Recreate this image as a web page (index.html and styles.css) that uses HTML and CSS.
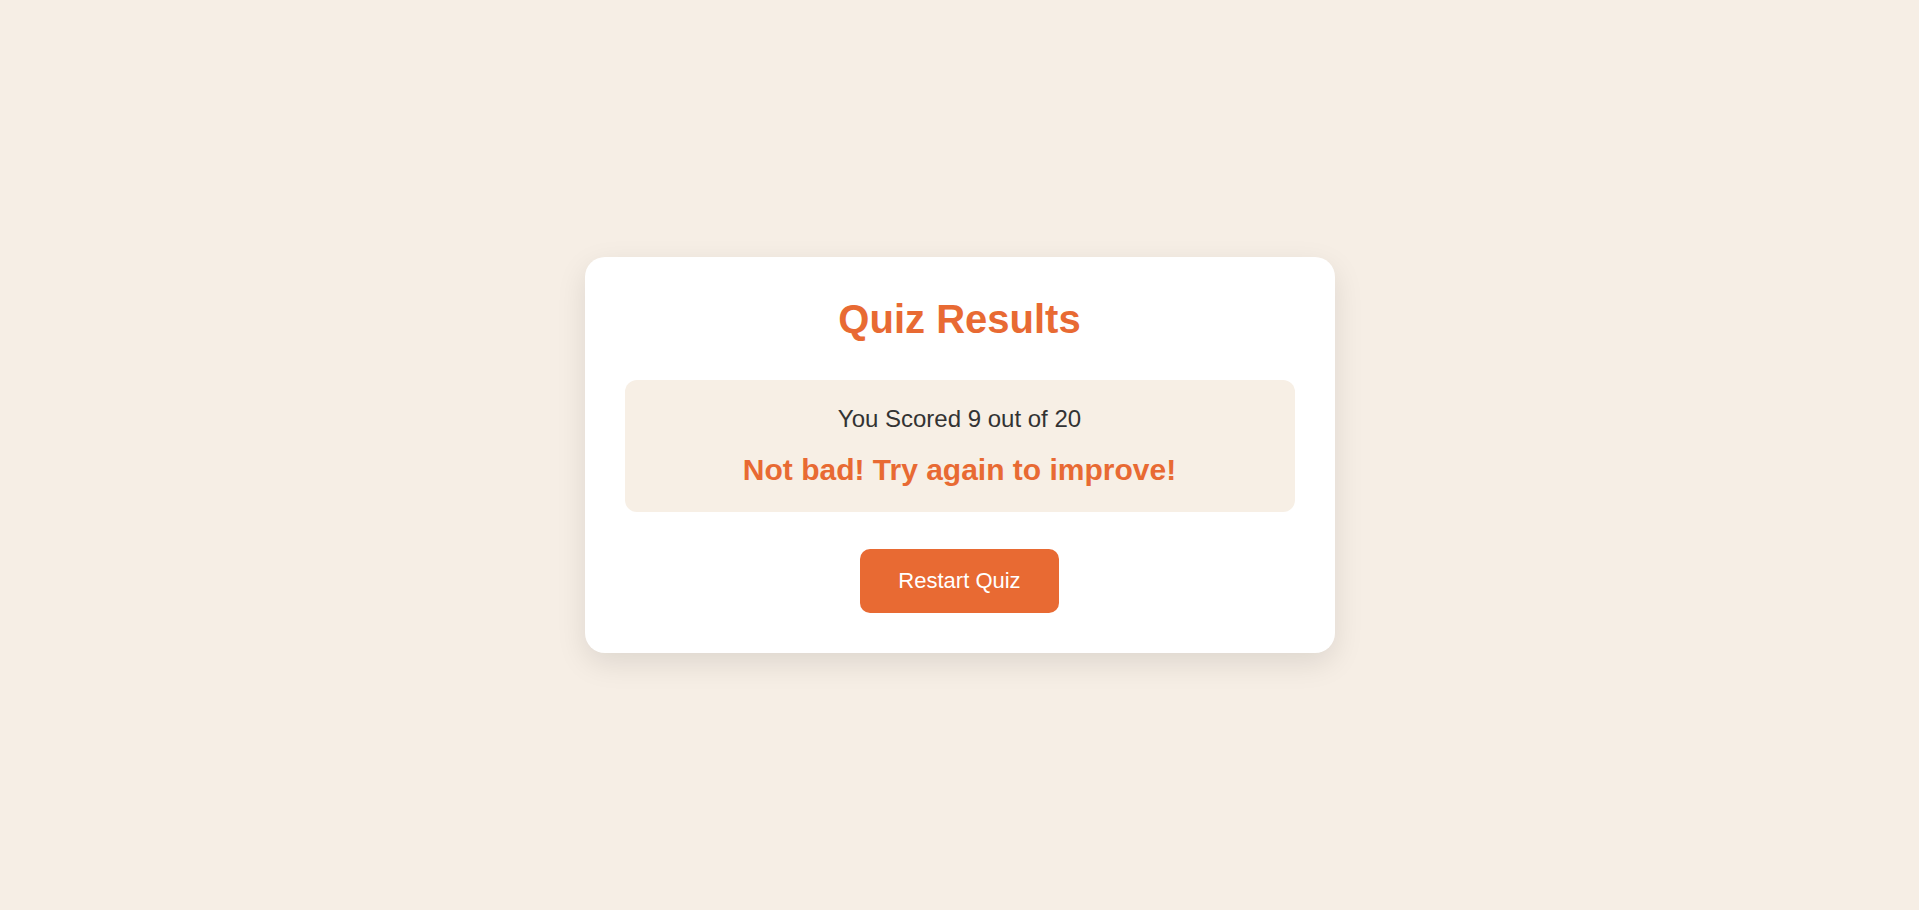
FILE: index.html
```html
<!DOCTYPE html>
<html lang="en">
<head>
<meta charset="utf-8">
<title>Quiz Results</title>
<link rel="stylesheet" href="styles.css">
</head>
<body>
  <main class="page">
    <section class="card">
      <h1 class="title">Quiz Results</h1>
      <div class="score-box">
        <p class="score">You Scored 9 out of 20</p>
        <p class="message">Not bad! Try again to improve!</p>
      </div>
      <button class="restart" type="button">Restart Quiz</button>
    </section>
  </main>
</body>
</html>
```

FILE: styles.css
```css
html, body {
  margin: 0;
  padding: 0;
  height: 100%;
}

body {
  background: #f6eee5;
  font-family: "Liberation Sans", Arial, sans-serif;
  color: #333333;
}

.page {
  min-height: 100vh;
  display: flex;
  align-items: center;
  justify-content: center;
}

.card {
  width: 750px;
  box-sizing: border-box;
  background: #ffffff;
  border-radius: 20px;
  padding: 40px 40px 40px;
  box-shadow: 0 10px 30px rgba(0, 0, 0, 0.1);
  display: flex;
  flex-direction: column;
  align-items: center;
  text-align: center;
}

.title {
  margin: 0 0 38px;
  font-size: 40px;
  font-weight: bold;
  color: #e86a33;
}

.score-box {
  align-self: stretch;
  background: #f7efe5;
  border-radius: 12px;
  padding: 25px 20px;
  display: flex;
  flex-direction: column;
  gap: 20px;
}

.score {
  margin: 0;
  font-size: 24px;
  color: #333333;
}

.message {
  margin: 0;
  font-size: 30px;
  font-weight: bold;
  color: #e86a33;
}

.restart {
  margin-top: 37px;
  background: #e86a33;
  color: #ffffff;
  border: none;
  border-radius: 10px;
  font-family: "Liberation Sans", Arial, sans-serif;
  font-size: 22px;
  padding: 19px 38px;
  cursor: pointer;
}
```
